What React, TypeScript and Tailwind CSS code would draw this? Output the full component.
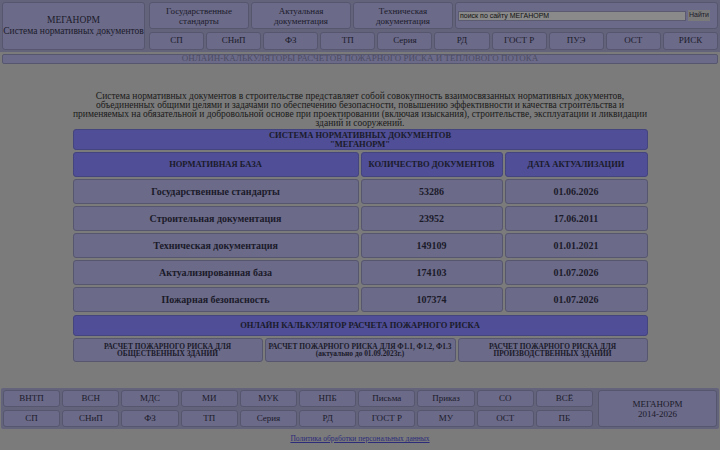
const topLinks = ["СП", "СНиП", "ФЗ", "ТП", "Серия", "РД", "ГОСТ Р", "ПУЭ", "ОСТ", "РИСК"];
const footRow1 = ["ВНТП", "ВСН", "МДС", "МИ", "МУК", "НПБ", "Письма", "Приказ", "СО", "ВСЁ"];
const footRow2 = ["СП", "СНиП", "ФЗ", "ТП", "Серия", "РД", "ГОСТ Р", "МУ", "ОСТ", "ПБ"];

const rows = [
  { name: "Государственные стандарты", count: "53286", date: "01.06.2026" },
  { name: "Строительная документация", count: "23952", date: "17.06.2011" },
  { name: "Техническая документация", count: "149109", date: "01.01.2021" },
  { name: "Актуализированная база", count: "174103", date: "01.07.2026" },
  { name: "Пожарная безопасность", count: "107374", date: "01.07.2026" },
];

const box = "bg-[#6b6a89] border border-[#56566e] rounded-[3px] flex items-center justify-center text-center";
const head = "bg-[#4f4e96] border border-[#44447e] rounded-[3px] flex items-center justify-center text-center font-bold";

export default function App() {
  return (
    <div className="w-[720px] h-[450px] overflow-hidden bg-[#7b7b7b] text-[#1b1b2a] font-['Liberation_Serif',serif]">
      {/* Header */}
      <header className="bg-[#63637c] flex gap-[4px] px-[2px] py-[2px] h-[52px]">
        <div className={`${box} w-[143px] flex-col text-[9.5px] leading-[11px]`}>
          <span>МЕГАНОРМ</span>
          <span>Система нормативных документов</span>
        </div>
        <div className="flex-1 flex flex-col gap-[3px]">
          <div className="flex gap-[2px] h-[27px]">
            {["Государственные стандарты", "Актуальная документация", "Техническая документация"].map((t) => (
              <div key={t} className={`${box} w-[100px] text-[9px] leading-[10px] px-[14px]`}>{t}</div>
            ))}
            <div className={`${box} flex-1 justify-start gap-[2px] pl-[2px]`}>
              <div className="h-[10px] w-[228px] bg-[#8a8a8a] border border-[#5a5a70] text-left text-[7px] leading-[8px] px-[1px] font-['Liberation_Sans',sans-serif] text-[#111]">
                поиск по сайту МЕГАНОРМ
              </div>
              <div className="text-[7px] font-['Liberation_Sans',sans-serif] bg-[#7a7a7a] px-[1px]">Найти</div>
            </div>
          </div>
          <div className="flex gap-[2px] h-[18px]">
            {topLinks.map((t) => (
              <div key={t} className={`${box} flex-1 text-[9px]`}>{t}</div>
            ))}
          </div>
        </div>
      </header>

      {/* Banner */}
      <div className="mx-[2px] mt-[2px] h-[10px] bg-[#6b6a89] border border-[#56566e] rounded-[2px] flex items-center justify-center text-[9px] text-[#4c4c62]">
        ОНЛАЙН-КАЛЬКУЛЯТОРЫ РАСЧЕТОВ ПОЖАРНОГО РИСКА И ТЕПЛОВОГО ПОТОКА
      </div>

      <main className="w-[575px] mx-auto">
        <p className="mt-[28px] text-center text-[9.5px] leading-[9px] text-[#1a1a1a]">
          Система нормативных документов в строительстве представляет собой совокупность взаимосвязанных нормативных документов,
          объединенных общими целями и задачами по обеспечению безопасности, повышению эффективности и качества строительства и
          применяемых на обязательной и добровольной основе при проектировании (включая изыскания), строительстве, эксплуатации и ликвидации
          зданий и сооружений.
        </p>

        <div className="mt-[1px] flex flex-col gap-[2px] text-[8.5px]">
          <div className={`${head} h-[21px] flex-col leading-[9px]`}>
            <span>СИСТЕМА НОРМАТИВНЫХ ДОКУМЕНТОВ</span>
            <span>"МЕГАНОРМ"</span>
          </div>
          <div className="flex gap-[2px] h-[25px]">
            <div className={`${head} w-[286px]`}>НОРМАТИВНАЯ БАЗА</div>
            <div className={`${head} w-[142px]`}>КОЛИЧЕСТВО ДОКУМЕНТОВ</div>
            <div className={`${head} flex-1`}>ДАТА АКТУАЛИЗАЦИИ</div>
          </div>
          {rows.map((r) => (
            <div key={r.name} className="flex gap-[2px] h-[25px] font-bold text-[10px]">
              <div className={`${box} w-[286px]`}>{r.name}</div>
              <div className={`${box} w-[142px]`}>{r.count}</div>
              <div className={`${box} flex-1`}>{r.date}</div>
            </div>
          ))}
          <div className={`${head} h-[21px] mt-[1px]`}>ОНЛАЙН КАЛЬКУЛЯТОР РАСЧЕТА ПОЖАРНОГО РИСКА</div>
          <div className="flex gap-[2px] h-[24px] text-[7.4px] leading-[7.5px] font-bold">
            <div className={`${box} w-[190px] flex-col px-[20px]`}>РАСЧЕТ ПОЖАРНОГО РИСКА ДЛЯ ОБЩЕСТВЕННЫХ ЗДАНИЙ</div>
            <div className={`${box} w-[191px] flex-col whitespace-nowrap overflow-hidden`}>
              <span>РАСЧЕТ ПОЖАРНОГО РИСКА ДЛЯ Ф1.1, Ф1.2, Ф1.3</span>
              <span>(актуально до 01.09.2023г.)</span>
            </div>
            <div className={`${box} flex-1 flex-col px-[20px]`}>РАСЧЕТ ПОЖАРНОГО РИСКА ДЛЯ ПРОИЗВОДСТВЕННЫХ ЗДАНИЙ</div>
          </div>
        </div>
      </main>

      {/* Footer */}
      <footer className="mt-[26px] mx-[1px] bg-[#63637c] rounded-[2px] flex gap-[5px] p-[2px] h-[41px]">
        <div className="flex-1 flex flex-col gap-[3px]">
          {[footRow1, footRow2].map((row, i) => (
            <div key={i} className="flex gap-[2px] flex-1">
              {row.map((t) => (
                <div key={t} className={`${box} flex-1 text-[9px]`}>{t}</div>
              ))}
            </div>
          ))}
        </div>
        <div className={`${box} w-[119px] flex-col text-[9px] leading-[10px]`}>
          <span>МЕГАНОРМ</span>
          <span>2014-2026</span>
        </div>
      </footer>
      <div className="text-center mt-[4px] text-[7.5px]">
        <a className="underline text-[#2c2c7a]">Политика обработки персональных данных</a>
      </div>
    </div>
  );
}
